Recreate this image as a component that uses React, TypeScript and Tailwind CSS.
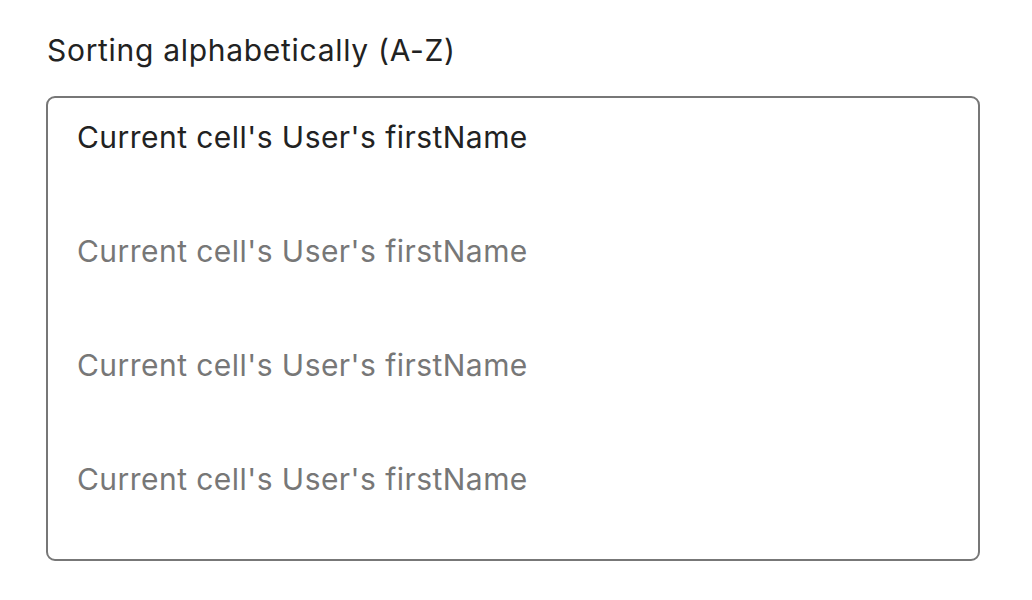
import React from "react";

const rows = [
  { label: "Current cell's User's firstName", active: true },
  { label: "Current cell's User's firstName", active: false },
  { label: "Current cell's User's firstName", active: false },
  { label: "Current cell's User's firstName", active: false },
];

export default function App() {
  return (
    <main className="min-h-screen w-[1032px] h-[600px] bg-white font-['Inter','Noto_Sans',sans-serif]">
      <div className="pl-[46px] pr-[52px] pt-[32px]">
        <h2 className="text-[30px] leading-[36px] tracking-[0.7px] text-[#222] pl-[1px]">Sorting alphabetically (A-Z)</h2>
        <ul className="mt-[28px] flex flex-col gap-[78px] rounded-[9px] border-2 border-[#777] pl-[29px] pt-[21px] pb-[62px]">
          {rows.map((row, i) => (
            <li
              key={i}
              className={
                row.active
                  ? "text-[30px] leading-[36px] tracking-[0.45px] text-[#222]"
                  : "text-[30px] leading-[36px] tracking-[0.45px] text-[#777]"
              }
            >
              {row.label}
            </li>
          ))}
        </ul>
      </div>
    </main>
  );
}
